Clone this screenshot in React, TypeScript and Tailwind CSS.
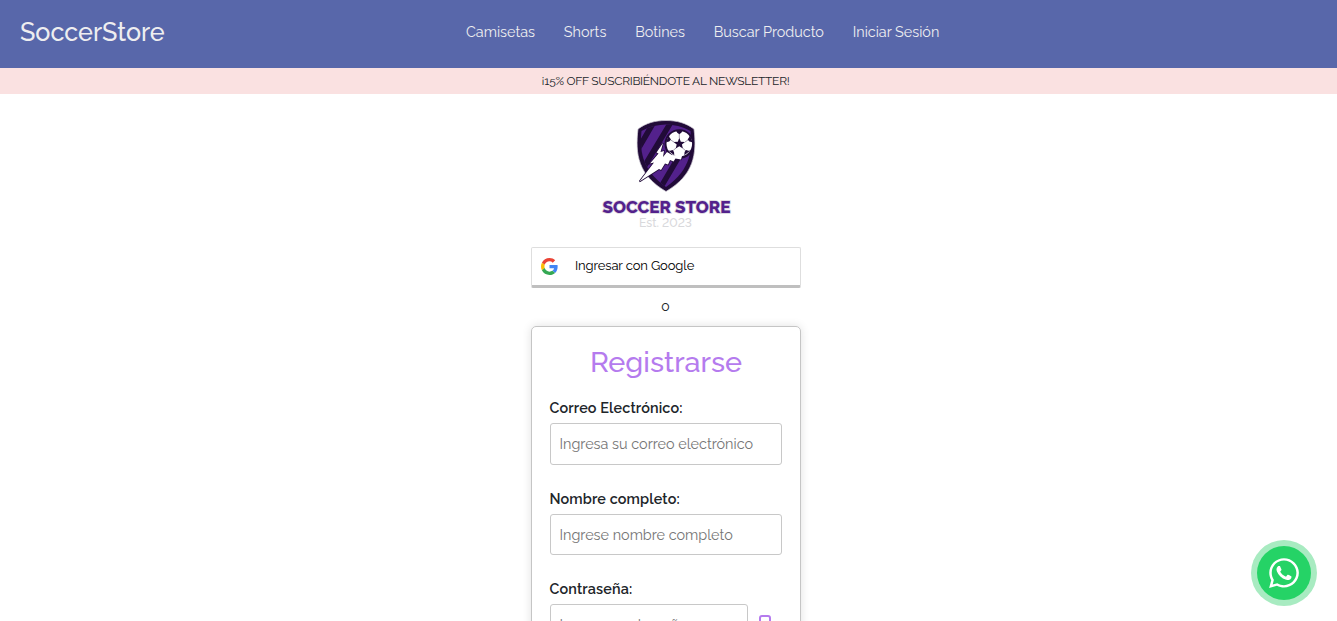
import React from 'react';
import { FaWhatsapp } from 'react-icons/fa';

function Shield() {
  return (
    <svg width="60" height="72" viewBox="0 0 60 72" className="block">
      <defs>
        <clipPath id="shield">
          <path d="M30 4.500C22 4.500 14 6.500 5.500 11C4 28 4 49 30 67C56 49 56 28 54.500 11C46 6.500 38 4.500 30 4.500Z" />
        </clipPath>
      </defs>
      <path d="M30 .5C19 .5 10 3 2 9C-1 34 2 55 30 71.500C58 55 61 34 58 9C50 3 41 .5 30 .5Z" fill="#210b38" stroke="#d9d5dd" strokeWidth=".7" />
      <g clipPath="url(#shield)">
        <path d="M0 0H60V72H0Z" fill="#53218c" />
        <path d="M19 0L-2 36M35 2L5 52M42 38L22 72" stroke="#210b38" strokeWidth="5.500" />
      </g>
      <circle cx="43.300" cy="24" r="14.800" fill="#210b38" />
      <path d="M27 23L20.500 32.500L22.500 33.500L14 43.500L18 42.500L3.500 61.500L23 49L25 50L29 43.500L32 44.500L34 40L37.500 41.500L39.500 38.500L45 39.500L46 36L36 35L31 32L27 37L28 31L24.500 32Z" fill="#fff" stroke="#210b38" strokeWidth="1.500" paintOrder="stroke" />
      <circle cx="43.300" cy="23.700" r="12.800" fill="#fff" />
      <g fill="#210b38">
        <path d="M43.300 17.800L44.800 21.700L49 22L45.900 24.600L46.900 28.600L43.300 26.300L39.700 28.600L40.700 24.600L37.600 22L41.800 21.700Z" />
        <path d="M39.500 10H47.100L45.300 12.700L43.300 14.200L41.300 12.700Z" />
        <path d="M54 15L56.500 22.300L53.400 21.400L51.600 19.500L53 17.500Z" />
        <path d="M32.600 15L30.100 22.300L33.200 21.400L35 19.500L33.600 17.500Z" />
        <path d="M54.500 30.500L48.300 35.200L48.600 32L50 29.900L52.500 30.700Z" />
        <path d="M32.100 30.500L38.300 35.200L38 32L36.600 29.900L34.100 30.700Z" />
      </g>
      <path d="M43.300 18V14M49 22L52 20M46.500 28L50 31M40 28L36.600 31M38 22L34.600 20" stroke="#210b38" strokeWidth=".4" />
    </svg>
  );
}

function GoogleLogo() {
  return (
    <svg width="17" height="17" viewBox="0 0 48 48" className="mr-[17px] block">
      <path fill="#EA4335" d="M24 9.500c3.540 0 6.710 1.220 9.210 3.600l6.850-6.850C35.900 2.380 30.470 0 24 0 14.620 0 6.510 5.380 2.560 13.220l7.980 6.190C12.430 13.720 17.740 9.500 24 9.500z" />
      <path fill="#4285F4" d="M46.980 24.550c0-1.570-.15-3.090-.38-4.550H24v9.020h12.940c-.58 2.960-2.260 5.480-4.780 7.180l7.730 6c4.510-4.180 7.090-10.360 7.090-17.650z" />
      <path fill="#FBBC05" d="M10.530 28.590c-.48-1.450-.76-2.990-.76-4.590s.27-3.140.76-4.590l-7.980-6.190C.92 16.460 0 20.120 0 24c0 3.880.92 7.540 2.560 10.780l7.970-6.190z" />
      <path fill="#34A853" d="M24 48c6.480 0 11.930-2.130 15.890-5.810l-7.730-6c-2.150 1.450-4.920 2.300-8.160 2.300-6.260 0-11.570-4.220-13.470-9.910l-7.980 6.190C6.510 42.620 14.620 48 24 48z" />
    </svg>
  );
}

function Field({ label, placeholder, className, inputClass }: { label: string; placeholder: string; className: string; inputClass: string }) {
  return (
    <label className={className}>
      <span className="-ml-[0.5px] block h-5 text-[14.4px] leading-5 font-semibold tracking-[0.13px] text-[#212529]">{label}</span>
      <input className={inputClass} placeholder={placeholder} />
    </label>
  );
}

export default function App() {
  return (
    <div className="h-[621px] overflow-hidden bg-white font-['Raleway','Lato',sans-serif] text-[#212529]">
      <header className="flex h-[68px] items-start bg-[#5867aa] text-[#eeeef0]">
        <div className="mt-[13px] ml-5 w-[446px] text-[25.200px] leading-[39px] font-medium">SoccerStore</div>
        <nav className="mt-[20px] flex gap-[28.800px] text-[14.400px] leading-6 whitespace-nowrap">
          <a>Camisetas</a><a>Shorts</a><a>Botines</a><a>Buscar Producto</a><a>Iniciar Sesión</a>
        </nav>
      </header>
      <div className="flex h-[26px] items-center justify-center bg-[#fae1e1] pr-[6px] text-[12px] tracking-[-0.270px]">¡15% OFF SUSCRIBIÉNDOTE AL NEWSLETTER!</div>
      <main className="flex flex-col items-center pt-[26px] pr-[5px]">
        <div className="flex h-[127px] flex-col items-center">
          <Shield />
          <svg width="136" height="40" viewBox="0 0 136 40" className="block overflow-visible font-['Raleway',sans-serif] lining-nums">
            <text x="4.500" y="20.800" textLength="128" lengthAdjust="spacingAndGlyphs" fontSize="17" fontWeight="800" fill="#53218c" stroke="#d9d5dd" strokeWidth="1.500" paintOrder="stroke">SOCCER STORE</text>
            <text x="41" y="34.500" textLength="53" lengthAdjust="spacingAndGlyphs" fontSize="13" fontWeight="500" fill="#d9d9dc">Est. 2023</text>
          </svg>
        </div>
        <button className="flex h-[41px] w-[270px] items-center rounded-[2px] border border-b-[3px] border-[#dedede] border-b-[#bfbfbf] pl-[9px] text-[13px]">
          <GoogleLogo />
          <span className="mb-[1px] tracking-[-0.120px] text-black">Ingresar con Google</span>
        </button>
        <div className="h-[38px] pr-px text-[14px] leading-[37px]">o</div>
        <section className="h-[400px] w-[270px] rounded-[5px] border border-[#c5c5c5] px-[18px] pt-[17px] shadow-[0_0_10px_rgba(0,0,0,0.12)]">
          <h1 className="h-9 text-center text-[28.800px] leading-9 font-medium text-[#b57bee]">Registrarse</h1>
          <Field label="Correo Electrónico:" placeholder="Ingresa su correo electrónico" className="mt-[18px] block" inputClass="mt-[5px] block h-[42px] w-[232px] rounded-[3px] border border-[#c8c8c8] px-[8.500px] pb-[2px] text-[14.400px] placeholder:text-[#757575]" />
          <Field label="Nombre completo:" placeholder="Ingrese nombre completo" className="mt-[24px] block" inputClass="mt-[5px] block h-[41px] w-[232px] rounded-[3px] border border-[#c8c8c8] px-[8.500px] text-[14.400px] placeholder:text-[#757575]" />
          <div className="mt-[24px] flex">
            <Field label="Contraseña:" placeholder="Ingrese contraseña" className="block" inputClass="mt-[5px] block h-[41px] w-[198px] rounded-[3px] border border-[#c8c8c8] px-[8.500px] text-[14.400px] placeholder:text-[#757575]" />
            <svg width="12" height="18" viewBox="0 0 12 18" className="mt-[36px] ml-[11px]" fill="none" stroke="#b57bee" strokeWidth="2"><rect x="1" y="1" width="10" height="16" rx="2" /></svg>
          </div>
        </section>
      </main>
      <a className="fixed right-[20px] bottom-[15px] flex size-[66px] items-center justify-center rounded-full bg-[#a8ebc1]">
        <span className="flex size-[54px] items-center justify-center rounded-full bg-[#25d366] text-white"><FaWhatsapp size={34} /></span>
      </a>
    </div>
  );
}
